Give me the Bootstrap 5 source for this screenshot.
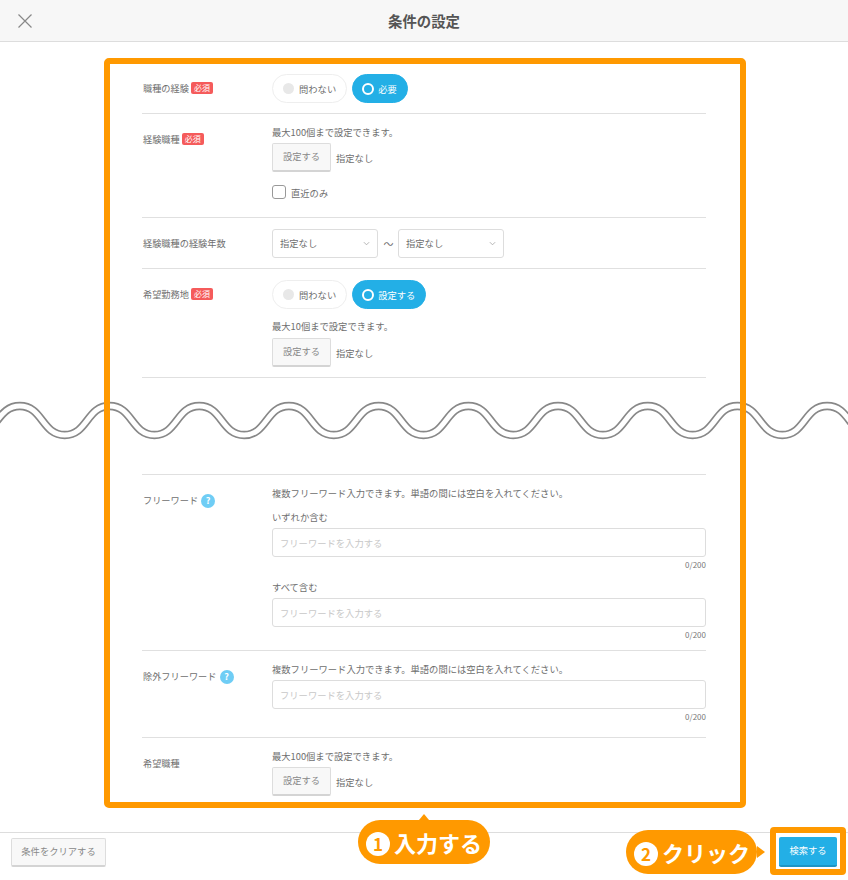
<!DOCTYPE html>
<html lang="ja">

<head>
  <meta charset="UTF-8">
  <meta name="viewport" content="width=device-width, initial-scale=1.0">
  <title>条件の設定</title>
  <link href="https://cdn.jsdelivr.net/npm/bootstrap@5.3.0/dist/css/bootstrap.min.css" rel="stylesheet">
  <style>
    body {
      font-family: "Noto Sans CJK JP", "Noto Sans", sans-serif;
      font-size: 9.3px;
      line-height: 12px;
      color: #6e6e6e;
      height: 880px;
      overflow: hidden;
    }

    .page-wrap { height: 880px; }

    .top-bar {
      height: 42px;
      background: #f7f7f7;
      border-bottom: 1px solid #ddd;
    }

    .top-title {
      font-size: 14.4px;
      font-weight: 700;
      color: #555;
    }

    .close-x {
      left: 18px;
      top: 14px;
    }

    .form-area {
      width: 564px;
      margin: 0 auto;
    }

    .first-area { padding-top: 21px; }

    .cond-row {
      padding: 11px 0 10px;
      border-bottom: 1px solid #e0e0e0;
    }

    .cond-row.top-line { border-top: 1px solid #e0e0e0; }
    .cond-row.tall-end { padding-bottom: 15px; }
    .cond-row.no-line { border-bottom: 0; }

    .cond-label {
      width: 130px;
      padding-left: 1px;
      font-size: 9.2px;
      line-height: 29px;
      flex-shrink: 0;
    }

    .req-tag {
      display: inline-block;
      width: 22px;
      height: 12px;
      line-height: 12px;
      margin-left: 2px;
      border-radius: 2px;
      background: #f55b5b;
      color: #fff;
      font-size: 8px;
      text-align: center;
      vertical-align: 1px;
    }

    .help-dot {
      display: inline-block;
      width: 14px;
      height: 14px;
      line-height: 14px;
      margin-left: 3px;
      border-radius: 50%;
      background: #6fcdf5;
      color: #fff;
      font-size: 9px;
      font-weight: 700;
      text-align: center;
      vertical-align: 0;
    }

    .pill-row { gap: 5px; }

    .pill-opt {
      height: 29px;
      padding: 0 10px;
      border-radius: 15px;
      border: 1px solid #eee;
      background: #fff;
      color: #6e6e6e;
      gap: 5px;
    }

    .pill-opt.is-on {
      padding: 0 10px 0 9px;
      background: #23afe6;
      border-color: #23afe6;
      color: #fff;
      gap: 4px;
    }

    .pill-dot {
      width: 11px;
      height: 11px;
      border-radius: 50%;
      background: #e8e8e8;
    }

    .is-on .pill-dot {
      width: 12px;
      height: 12px;
      background: transparent;
      border: 2px solid #fff;
    }

    .note-line { padding-top: 1px; }

    .pick-line {
      gap: 5px;
      margin-top: 5px;
    }

    .pick-btn {
      height: 29px;
      width: 59px;
      padding: 0;
      font-size: 9.3px;
      color: #888;
      background: #f8f8f8;
      border: 1px solid #ddd;
      border-bottom: 2px solid #d4d4d4;
      border-radius: 2px;
    }

    .note-gap-lg { margin-top: 10px; padding-bottom: 1px; }

    .only-recent {
      margin-top: 13px;
      margin-bottom: 8px;
      height: 14px;
    }

    .only-recent .form-check-input {
      width: 14px;
      height: 14px;
      margin: 0 5px 0 0;
      border: 1px solid #999;
      border-radius: 3px;
    }

    .only-recent label { padding-top: 1px; }

    .year-select {
      width: 106px;
      height: 29px;
      padding: 0 20px 0 7px;
      font-size: 9.3px;
      color: #6e6e6e;
      border-color: #ddd;
      border-radius: 3px;
      background-size: 7px 7px;
      background-position: right 7px center;
      background-image: url("data:image/svg+xml,%3csvg xmlns='http://www.w3.org/2000/svg' viewBox='0 0 16 16'%3e%3cpath fill='none' stroke='%23aaa' stroke-width='2' d='M2 5l6 6 6-6'/%3e%3c/svg%3e");
    }

    .tilde { width: 20px; padding-left: 1px; text-align: center; font-size: 10px; }

    .wave-band {
      display: block;
      height: 96px;
    }

    .wave-under { fill: none; stroke: #888; stroke-width: 8.4; }
    .wave-over { fill: none; stroke: #fff; stroke-width: 5; }

    .word-input {
      height: 29px;
      padding: 1px 7px 0;
      font-size: 9.3px;
      color: #6e6e6e;
      border-color: #ddd;
      border-radius: 3px;
    }

    .word-input::placeholder { color: #c8c8c8; }

    .sub-label { margin-top: 12px; margin-bottom: 5px; }
    .sub-label.next { margin-top: 11px; }
    .input-note { margin-bottom: 5px; }

    .count-text {
      margin-top: 3px;
      height: 10px;
      line-height: 10px;
      font-size: 8px;
      text-align: right;
      color: #777;
    }

    .foot-bar {
      height: 48px;
      border-top: 1px solid #ddd;
      padding: 5px 11px 0;
    }

    .clear-btn {
      width: 95px;
      height: 29px;
      padding: 0;
      font-size: 9.3px;
      color: #888;
      background: #f8f8f8;
      border: 1px solid #ddd;
      border-bottom: 2px solid #d4d4d4;
      border-radius: 2px;
    }

    .search-btn {
      width: 58px;
      height: 30px;
      padding: 0;
      margin-top: -1px;
      font-size: 9.3px;
      color: #fff;
      background: #23afe6;
      border: 0;
      border-bottom: 2px solid #1c95c6;
      border-radius: 2px;
    }

    /* annotations painted on top of the screenshot */
    .mark-frame {
      position: absolute;
      border: 6px solid #f90;
      border-radius: 5px;
      pointer-events: none;
    }

    .frame-form { left: 104px; top: 58px; width: 642px; height: 750px; }
    .frame-search { left: 770px; top: 827px; width: 76px; height: 48px; border-radius: 4px; }

    .call-out {
      position: absolute;
      height: 44px;
      border-radius: 22px;
      background: #f90;
      color: #fff;
      font-size: 22px;
      font-weight: 700;
      line-height: 44px;
      white-space: nowrap;
    }

    .call-one { left: 358px; top: 820px; width: 132px; padding-left: 8px; }
    .call-two { left: 626px; top: 830px; width: 131px; padding-left: 8px; }

    .call-one::before {
      content: "";
      position: absolute;
      left: 61px;
      top: -6px;
      border: solid transparent;
      border-width: 0 5px 6px;
      border-bottom-color: #f90;
    }

    .call-two::after {
      content: "";
      position: absolute;
      right: -8px;
      top: 16px;
      border: solid transparent;
      border-width: 6px 0 6px 8px;
      border-left-color: #f90;
    }

    .call-num {
      display: inline-block;
      width: 24px;
      height: 24px;
      line-height: 24px;
      margin-right: 4px;
      border-radius: 50%;
      background: #fff;
      color: #f90;
      font-size: 17px;
      text-align: center;
      vertical-align: 1px;
    }
  </style>
</head>

<body>
  <div class="page-wrap d-flex flex-column position-relative">
    <header class="top-bar position-relative d-flex align-items-center justify-content-center flex-shrink-0">
      <svg class="close-x position-absolute" width="14" height="14" viewBox="0 0 14 14">
        <path d="M.5.5l13 13M13.5.5l-13 13" fill="none" stroke="#888" stroke-width="1.2"/>
      </svg>
      <div class="top-title">条件の設定</div>
    </header>

    <main class="flex-grow-1 overflow-hidden">
      <div class="form-area first-area">
        <div class="cond-row d-flex">
          <div class="cond-label">職種の経験<span class="req-tag">必須</span></div>
          <div class="pill-row d-flex">
            <div class="pill-opt d-flex align-items-center"><span class="pill-dot"></span>問わない</div>
            <div class="pill-opt is-on d-flex align-items-center"><span class="pill-dot"></span>必要</div>
          </div>
        </div>

        <div class="cond-row d-flex">
          <div class="cond-label">経験職種<span class="req-tag">必須</span></div>
          <div>
            <div class="note-line">最大100個まで設定できます。</div>
            <div class="pick-line d-flex align-items-center">
              <button class="btn pick-btn" type="button">設定する</button><span>指定なし</span>
            </div>
            <div class="only-recent d-flex align-items-center">
              <input class="form-check-input" type="checkbox" id="recentOnly">
              <label for="recentOnly">直近のみ</label>
            </div>
          </div>
        </div>

        <div class="cond-row d-flex">
          <div class="cond-label">経験職種の経験年数</div>
          <div class="d-flex align-items-center">
            <select class="form-select year-select"><option>指定なし</option></select>
            <span class="tilde">〜</span>
            <select class="form-select year-select"><option>指定なし</option></select>
          </div>
        </div>

        <div class="cond-row d-flex">
          <div class="cond-label">希望勤務地<span class="req-tag">必須</span></div>
          <div>
            <div class="pill-row d-flex">
              <div class="pill-opt d-flex align-items-center"><span class="pill-dot"></span>問わない</div>
              <div class="pill-opt is-on d-flex align-items-center"><span class="pill-dot"></span>設定する</div>
            </div>
            <div class="note-line note-gap-lg">最大10個まで設定できます。</div>
            <div class="pick-line d-flex align-items-center">
              <button class="btn pick-btn" type="button">設定する</button><span>指定なし</span>
            </div>
          </div>
        </div>
      </div>

      <svg class="wave-band" width="848" height="96" viewBox="0 0 848 96">
        <path class="wave-under" d="M-25 57c22 0 22-29 44.85-29s22 29 44.85 29 22-29 44.85-29 22 29 44.85 29 22-29 44.85-29 22 29 44.85 29 22-29 44.85-29 22 29 44.85 29 22-29 44.85-29 22 29 44.85 29 22-29 44.85-29 22 29 44.85 29 22-29 44.85-29 22 29 44.85 29 22-29 44.85-29 22 29 44.85 29 22-29 44.85-29 22 29 44.85 29 22-29 44.85-29 22 29 44.85 29"/>
        <path class="wave-over" d="M-25 57c22 0 22-29 44.85-29s22 29 44.85 29 22-29 44.85-29 22 29 44.85 29 22-29 44.85-29 22 29 44.85 29 22-29 44.85-29 22 29 44.85 29 22-29 44.85-29 22 29 44.85 29 22-29 44.85-29 22 29 44.85 29 22-29 44.85-29 22 29 44.85 29 22-29 44.85-29 22 29 44.85 29 22-29 44.85-29 22 29 44.85 29 22-29 44.85-29 22 29 44.85 29"/>
      </svg>

      <div class="form-area">
        <div class="cond-row top-line d-flex">
          <div class="cond-label">フリーワード<span class="help-dot">?</span></div>
          <div class="flex-grow-1">
            <div class="note-line">複数フリーワード入力できます。単語の間には空白を入れてください。</div>
            <div class="sub-label">いずれか含む</div>
            <input class="form-control word-input" type="text" placeholder="フリーワードを入力する">
            <div class="count-text">0/200</div>
            <div class="sub-label next">すべて含む</div>
            <input class="form-control word-input" type="text" placeholder="フリーワードを入力する">
            <div class="count-text">0/200</div>
          </div>
        </div>

        <div class="cond-row tall-end d-flex">
          <div class="cond-label">除外フリーワード<span class="help-dot">?</span></div>
          <div class="flex-grow-1">
            <div class="note-line input-note">複数フリーワード入力できます。単語の間には空白を入れてください。</div>
            <input class="form-control word-input" type="text" placeholder="フリーワードを入力する">
            <div class="count-text">0/200</div>
          </div>
        </div>

        <div class="cond-row no-line d-flex">
          <div class="cond-label">希望職種</div>
          <div>
            <div class="note-line">最大100個まで設定できます。</div>
            <div class="pick-line d-flex align-items-center">
              <button class="btn pick-btn" type="button">設定する</button><span>指定なし</span>
            </div>
          </div>
        </div>
      </div>
    </main>

    <footer class="foot-bar d-flex justify-content-between align-items-start flex-shrink-0">
      <button class="btn clear-btn" type="button">条件をクリアする</button>
      <button class="btn search-btn" type="button">検索する</button>
    </footer>

    <div class="mark-frame frame-form"></div>
    <div class="mark-frame frame-search"></div>
    <div class="call-out call-one"><span class="call-num">1</span>入力する</div>
    <div class="call-out call-two"><span class="call-num">2</span>クリック</div>
  </div>

  <script src="https://cdn.jsdelivr.net/npm/bootstrap@5.3.0/dist/js/bootstrap.bundle.min.js"></script>
</body>

</html>
